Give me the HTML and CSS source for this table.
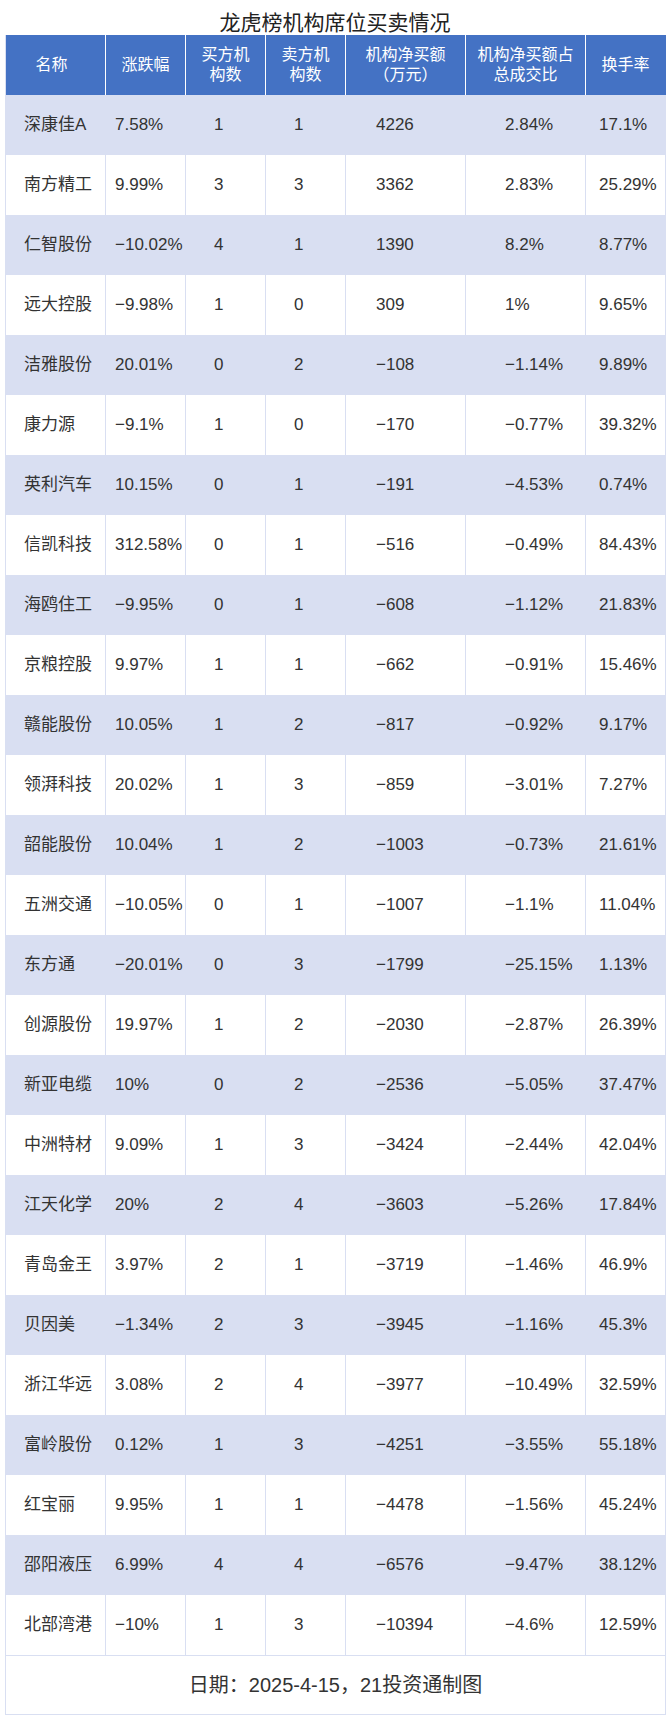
FILE: index.html
```html
<!DOCTYPE html>
<html lang="zh-CN">
<head>
<meta charset="utf-8">
<title>龙虎榜机构席位买卖情况</title>
<link rel="stylesheet" href="styles.css">
</head>
<body>
<div class="page">
  <h1 class="title">龙虎榜机构席位买卖情况</h1>
  <table class="lhb">
    <colgroup>
      <col class="c1"><col class="c2"><col class="c3"><col class="c4"><col class="c5"><col class="c6"><col class="c7">
    </colgroup>
    <thead>
      <tr>
        <th>名称</th>
        <th>涨跌幅</th>
        <th>买方机<br>构数</th>
        <th>卖方机<br>构数</th>
        <th>机构净买额<br><span class="fw">（</span>万元<span class="fw">）</span></th>
        <th>机构净买额占<br>总成交比</th>
        <th>换手率</th>
      </tr>
    </thead>
    <tbody>
      <tr><td>深康佳A</td><td>7.58%</td><td>1</td><td>1</td><td>4226</td><td>2.84%</td><td>17.1%</td></tr>
      <tr><td>南方精工</td><td>9.99%</td><td>3</td><td>3</td><td>3362</td><td>2.83%</td><td>25.29%</td></tr>
      <tr><td>仁智股份</td><td>−10.02%</td><td>4</td><td>1</td><td>1390</td><td>8.2%</td><td>8.77%</td></tr>
      <tr><td>远大控股</td><td>−9.98%</td><td>1</td><td>0</td><td>309</td><td>1%</td><td>9.65%</td></tr>
      <tr><td>洁雅股份</td><td>20.01%</td><td>0</td><td>2</td><td>−108</td><td>−1.14%</td><td>9.89%</td></tr>
      <tr><td>康力源</td><td>−9.1%</td><td>1</td><td>0</td><td>−170</td><td>−0.77%</td><td>39.32%</td></tr>
      <tr><td>英利汽车</td><td>10.15%</td><td>0</td><td>1</td><td>−191</td><td>−4.53%</td><td>0.74%</td></tr>
      <tr><td>信凯科技</td><td>312.58%</td><td>0</td><td>1</td><td>−516</td><td>−0.49%</td><td>84.43%</td></tr>
      <tr><td>海鸥住工</td><td>−9.95%</td><td>0</td><td>1</td><td>−608</td><td>−1.12%</td><td>21.83%</td></tr>
      <tr><td>京粮控股</td><td>9.97%</td><td>1</td><td>1</td><td>−662</td><td>−0.91%</td><td>15.46%</td></tr>
      <tr><td>赣能股份</td><td>10.05%</td><td>1</td><td>2</td><td>−817</td><td>−0.92%</td><td>9.17%</td></tr>
      <tr><td>领湃科技</td><td>20.02%</td><td>1</td><td>3</td><td>−859</td><td>−3.01%</td><td>7.27%</td></tr>
      <tr><td>韶能股份</td><td>10.04%</td><td>1</td><td>2</td><td>−1003</td><td>−0.73%</td><td>21.61%</td></tr>
      <tr><td>五洲交通</td><td>−10.05%</td><td>0</td><td>1</td><td>−1007</td><td>−1.1%</td><td>11.04%</td></tr>
      <tr><td>东方通</td><td>−20.01%</td><td>0</td><td>3</td><td>−1799</td><td>−25.15%</td><td>1.13%</td></tr>
      <tr><td>创源股份</td><td>19.97%</td><td>1</td><td>2</td><td>−2030</td><td>−2.87%</td><td>26.39%</td></tr>
      <tr><td>新亚电缆</td><td>10%</td><td>0</td><td>2</td><td>−2536</td><td>−5.05%</td><td>37.47%</td></tr>
      <tr><td>中洲特材</td><td>9.09%</td><td>1</td><td>3</td><td>−3424</td><td>−2.44%</td><td>42.04%</td></tr>
      <tr><td>江天化学</td><td>20%</td><td>2</td><td>4</td><td>−3603</td><td>−5.26%</td><td>17.84%</td></tr>
      <tr><td>青岛金王</td><td>3.97%</td><td>2</td><td>1</td><td>−3719</td><td>−1.46%</td><td>46.9%</td></tr>
      <tr><td>贝因美</td><td>−1.34%</td><td>2</td><td>3</td><td>−3945</td><td>−1.16%</td><td>45.3%</td></tr>
      <tr><td>浙江华远</td><td>3.08%</td><td>2</td><td>4</td><td>−3977</td><td>−10.49%</td><td>32.59%</td></tr>
      <tr><td>富岭股份</td><td>0.12%</td><td>1</td><td>3</td><td>−4251</td><td>−3.55%</td><td>55.18%</td></tr>
      <tr><td>红宝丽</td><td>9.95%</td><td>1</td><td>1</td><td>−4478</td><td>−1.56%</td><td>45.24%</td></tr>
      <tr><td>邵阳液压</td><td>6.99%</td><td>4</td><td>4</td><td>−6576</td><td>−9.47%</td><td>38.12%</td></tr>
      <tr><td>北部湾港</td><td>−10%</td><td>1</td><td>3</td><td>−10394</td><td>−4.6%</td><td>12.59%</td></tr>
    </tbody>
    <tfoot>
      <tr><td colspan="7">日期：2025-4-15，21投资通制图</td></tr>
    </tfoot>
  </table>
</div>
</body>
</html>
```

FILE: styles.css
```css
html, body {
  margin: 0;
  padding: 0;
  background: #ffffff;
}

.page {
  width: 670px;
  font-family: "Liberation Sans", "Noto Sans CJK SC", sans-serif;
  color: #333333;
}

.title {
  margin: 0;
  height: 35px;
  box-sizing: border-box;
  padding-top: 12px;
  font-size: 21px;
  line-height: 21px;
  font-weight: normal;
  text-align: center;
  color: #222222;
}

.lhb {
  margin-left: 5px;
  width: 661px;
  table-layout: fixed;
  border-collapse: separate;
  border-spacing: 0;
  border-left: 1px solid #d9dff2;
}

.c1 { width: 100px; }
.c2 { width: 80px; }
.c3 { width: 80px; }
.c4 { width: 80px; }
.c5 { width: 120px; }
.c6 { width: 120px; }
.c7 { width: 80px; }

.lhb th {
  height: 60px;
  box-sizing: border-box;
  padding: 0;
  background: #4472c4;
  color: #ffffff;
  font-size: 16px;
  line-height: 20px;
  font-weight: normal;
  text-align: center;
  vertical-align: middle;
  border-right: 1px solid #ffffff;
}

.lhb th:first-child {
  padding-right: 8px;
}

.lhb th:last-child {
  border-right: 1px solid #4472c4;
}

.fw {
  display: inline-block;
  width: 16px;
  text-align: center;
}

.lhb tbody td {
  height: 60px;
  box-sizing: border-box;
  padding: 0;
  font-size: 17px;
  line-height: 20px;
  text-align: left;
  vertical-align: middle;
  white-space: nowrap;
  overflow: visible;
  border-right: 1px solid #d9dff2;
}

.lhb tbody tr:nth-child(odd) td {
  background: #d9dff2;
}

.lhb tbody tr:nth-child(even) td {
  background: #ffffff;
}

.lhb tbody td:nth-child(1) { padding-left: 18px; }
.lhb tbody td:nth-child(2) { padding-left: 9px; }
.lhb tbody td:nth-child(3) { padding-left: 28px; }
.lhb tbody td:nth-child(4) { padding-left: 28px; }
.lhb tbody td:nth-child(5) { padding-left: 30px; }
.lhb tbody td:nth-child(6) { padding-left: 39px; }
.lhb tbody td:nth-child(7) { padding-left: 13px; }

.lhb tfoot td {
  height: 60px;
  box-sizing: border-box;
  padding: 0;
  font-size: 20px;
  line-height: 22px;
  text-align: center;
  vertical-align: middle;
  border-top: 1px solid #d9dff2;
  border-bottom: 1px solid #d9dff2;
  border-right: 1px solid #d9dff2;
  background: #ffffff;
}
```
